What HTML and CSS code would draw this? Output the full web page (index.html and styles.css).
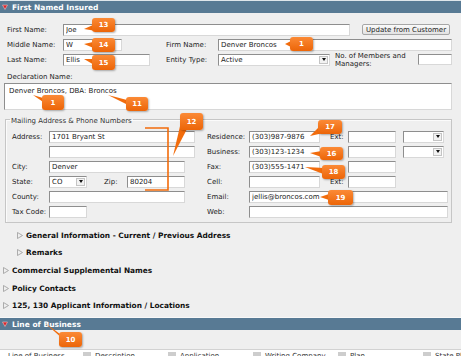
FILE: index.html
```html
<!DOCTYPE html>
<html lang="en">
<head>
    <meta charset="UTF-8">
    <meta name="viewport" content="width=device-width, initial-scale=1.0">
    <title>First Named Insured</title>
    <link rel="stylesheet" href="styles.css">
</head>
<body>
<div class="page">
    <div class="bar">
        <svg class="caret" width="6" height="6" viewBox="0 0 6 6"><polygon points="0.5,1 5.5,1 3,5.5" fill="#d8262b" stroke="#f3c2c2" stroke-width="0.6"/></svg>
        First Named Insured
    </div>

    <div class="insured">
        <div class="row">
            <label class="lbl">First Name:</label>
            <input class="w-first" type="text" value="Joe">
            <button class="btn">Update from Customer</button>
        </div>
        <div class="row">
            <label class="lbl">Middle Name:</label>
            <input class="w-middle" type="text" value="W">
            <label class="lbl lbl-mid">Firm Name:</label>
            <input class="w-firm" type="text" value="Denver Broncos">
        </div>
        <div class="row">
            <label class="lbl">Last Name:</label>
            <input class="w-last" type="text" value="Ellis">
            <label class="lbl lbl-entity">Entity Type:</label>
            <div class="select w-entity"><span class="val">Active</span><span class="arr"></span></div>
            <label class="lbl-members">No. of Members and Managers:</label>
            <input class="w-members" type="text" value="">
        </div>

        <label class="decl-label">Declaration Name:</label>
        <textarea class="decl">Denver Broncos, DBA: Broncos</textarea>

        <fieldset class="mailing">
            <legend>Mailing Address &amp; Phone Numbers</legend>
            <div class="mgrid">
                <label>Address:</label>
                <div class="cell"><input class="w-addr" type="text" value="1701 Bryant St"></div>
                <label>Residence:</label>
                <div class="cell">
                    <input class="w-phone" type="text" value="(303)987-9876">
                    <span class="ext">Ext:</span>
                    <input class="w-ext" type="text" value="">
                    <div class="select w-type"><span class="val"></span><span class="arr"></span></div>
                </div>

                <label></label>
                <div class="cell"><input class="w-addr" type="text" value=""></div>
                <label>Business:</label>
                <div class="cell">
                    <input class="w-phone" type="text" value="(303)123-1234">
                    <span class="ext"></span>
                    <input class="w-ext" type="text" value="">
                    <div class="select w-type"><span class="val"></span><span class="arr"></span></div>
                </div>

                <label>City:</label>
                <div class="cell"><input class="w-city" type="text" value="Denver"></div>
                <label>Fax:</label>
                <div class="cell">
                    <input class="w-phone" type="text" value="(303)555-1471">
                    <span class="ext"></span>
                    <input class="w-ext" type="text" value="">
                </div>

                <label>State:</label>
                <div class="cell">
                    <div class="select w-state"><span class="val">CO</span><span class="arr"></span></div>
                    <span class="zip">Zip:</span>
                    <input class="w-zip" type="text" value="80204">
                </div>
                <label>Cell:</label>
                <div class="cell">
                    <input class="w-phone" type="text" value="">
                    <span class="ext">Ext:</span>
                    <input class="w-ext" type="text" value="">
                </div>

                <label>County:</label>
                <div class="cell"><input class="w-city" type="text" value=""></div>
                <label>Email:</label>
                <div class="cell"><input class="w-email" type="text" value="jellis@broncos.com"></div>

                <label>Tax Code:</label>
                <div class="cell"><input class="w-tax" type="text" value=""></div>
                <label>Web:</label>
                <div class="cell"><input class="w-email" type="text" value=""></div>
            </div>
        </fieldset>

        <div class="section sub"><svg class="tri" width="6" height="7" viewBox="0 0 6 7"><polygon points="0.5,0.5 5.5,3.5 0.5,6.5" fill="none" stroke="#9a9a9a" stroke-width="0.8"/></svg>General Information - Current / Previous Address</div>
        <div class="section sub"><svg class="tri" width="6" height="7" viewBox="0 0 6 7"><polygon points="0.5,0.5 5.5,3.5 0.5,6.5" fill="none" stroke="#9a9a9a" stroke-width="0.8"/></svg>Remarks</div>
    </div>

    <div class="section top"><svg class="tri" width="6" height="7" viewBox="0 0 6 7"><polygon points="0.5,0.5 5.5,3.5 0.5,6.5" fill="none" stroke="#9a9a9a" stroke-width="0.8"/></svg>Commercial Supplemental Names</div>
    <div class="section top"><svg class="tri" width="6" height="7" viewBox="0 0 6 7"><polygon points="0.5,0.5 5.5,3.5 0.5,6.5" fill="none" stroke="#9a9a9a" stroke-width="0.8"/></svg>Policy Contacts</div>
    <div class="section top"><svg class="tri" width="6" height="7" viewBox="0 0 6 7"><polygon points="0.5,0.5 5.5,3.5 0.5,6.5" fill="none" stroke="#9a9a9a" stroke-width="0.8"/></svg>125, 130 Applicant Information / Locations</div>

    <div class="bar bar-lob">
        <svg class="caret" width="6" height="6" viewBox="0 0 6 6"><polygon points="0.5,1 5.5,1 3,5.5" fill="#d8262b" stroke="#f3c2c2" stroke-width="0.6"/></svg>
        Line of Business
    </div>
    <div class="lob-space"></div>
    <div class="grid-head">
        <div class="col first">Line of Business</div>
        <div class="col"><span class="sort"></span>Description</div>
        <div class="col"><span class="sort"></span>Application</div>
        <div class="col"><span class="sort"></span>Writing Company</div>
        <div class="col"><span class="sort"></span>Plan</div>
        <div class="col"><span class="sort"></span>State Plan</div>
    </div>

    <!-- callouts -->
    <svg class="tails" width="461" height="356" viewBox="0 0 461 356">
        <polyline points="145,128 168,128 168,190 145,190" fill="none" stroke="#f26c0c" stroke-width="1.6"/>
        <g fill="#f26c0c">
            <polygon points="93,25 96,31 84,29"/>
            <polygon points="93,42 96,49 84,44"/>
            <polygon points="93,59 96,66 84,59"/>
            <polygon points="291,41 293,48 285,44"/>
            <polygon points="43,98 46,104 33,95"/>
            <polygon points="127,100 130,106 108,95"/>
            <polygon points="181,122 187,129 173,156"/>
            <polygon points="319,127 323,133 310,136"/>
            <polygon points="321,151 324,158 310,153"/>
            <polygon points="323,168 326,175 305,167"/>
            <polygon points="329,194 332,201 320,197"/>
            <polygon points="60,334 64,340 45,323"/>
        </g>
    </svg>
    <div class="co co-13">13</div>
    <div class="co co-14">14</div>
    <div class="co co-15">15</div>
    <div class="co co-firm">1</div>
    <div class="co co-decl">1</div>
    <div class="co co-11">11</div>
    <div class="co co-12">12</div>
    <div class="co co-17">17</div>
    <div class="co co-16">16</div>
    <div class="co co-18">18</div>
    <div class="co co-19">19</div>
    <div class="co co-10">10</div>
</div>
</body>
</html>
```

FILE: styles.css
```css
* {
    margin: 0;
    padding: 0;
    box-sizing: border-box;
}

body {
    font-family: 'DejaVu Sans', Verdana, sans-serif;
    font-size: 7px;
    color: #222;
    background: #efefef;
    width: 461px;
    height: 356px;
    overflow: hidden;
}

.page {
    position: relative;
    height: 356px;
}

.bar {
    height: 13px;
    border-top: 1px solid #dfe6eb;
    background: #587a94;
    color: #fff;
    font-weight: bold;
    font-size: 7.5px;
    display: flex;
    align-items: center;
    padding-left: 2px;
}

.caret {
    margin-right: 4px;
}

.insured {
    padding: 9px 9px 0 7px;
}

.row {
    display: flex;
    align-items: center;
    height: 15px;
}

.lbl {
    width: 56px;
    flex-shrink: 0;
}

input, textarea {
    font: inherit;
    color: #222;
    background: #fff;
    border: 1px solid;
    border-color: #8e8e8e #d8d8d8 #d8d8d8 #8e8e8e;
    outline: none;
}

input {
    height: 12px;
    padding: 0 2px;
    flex-shrink: 0;
}

.w-first { width: 287px; }
.w-middle { width: 59px; }
.w-last { width: 87px; }
.w-firm { width: 234px; }
.w-members { width: 34px; height: 11px; }

.lbl-mid,
.lbl-entity {
    width: 52px;
}
.lbl-mid { margin-left: 44px; }
.lbl-entity { margin-left: 16px; }

.lbl-members {
    width: 83px;
    margin-left: 5px;
    line-height: 8px;
}

.btn {
    margin-left: 12px;
    width: 88px;
    height: 11px;
    font: inherit;
    color: #222;
    border: 1px solid #a6a6a6;
    border-radius: 2px;
    background: linear-gradient(#fafafa, #e2e2e2);
}

.select {
    display: flex;
    height: 12px;
    background: #fff;
    border: 1px solid;
    border-color: #8e8e8e #d8d8d8 #d8d8d8 #8e8e8e;
    flex-shrink: 0;
}

.select .val {
    flex: 1;
    padding-left: 2px;
    line-height: 10px;
}

.select .arr {
    width: 9px;
    margin: 1px;
    background: #f2f2f2;
    border: 1px solid #c4c4c4;
    display: flex;
    align-items: center;
    justify-content: center;
}

.select .arr::after {
    content: "";
    border-left: 2.5px solid transparent;
    border-right: 2.5px solid transparent;
    border-top: 3px solid #111;
}

.w-entity { width: 112px; }

.decl-label {
    display: block;
    margin-top: 6px;
    line-height: 8px;
}

.decl {
    display: block;
    margin: 2px 0 0 -3px;
    width: 448px;
    height: 27px;
    padding: 3px 4px;
    resize: none;
    line-height: 8px;
}

.mailing {
    margin: 4px 0 0 -2px;
    width: 447px;
    border: 1px solid #c6c6c6;
    box-shadow: inset 1px 1px 0 #fbfbfb;
    padding: 4px 3px 3px 6px;
}

.mailing legend {
    margin-left: -2px;
    padding: 3px 1px 0;
    line-height: 8px;
    color: #333;
}

.mgrid {
    display: grid;
    grid-template-columns: 37px 158px 42px 1fr;
    grid-auto-rows: 15px;
    align-items: center;
}

.cell {
    display: flex;
    align-items: center;
}

.w-addr { width: 146px; }
.w-city { width: 136px; }
.w-state { width: 38px; }
.w-zip { width: 58px; }
.w-tax { width: 38px; }
.w-phone { width: 71px; }
.w-ext { width: 48px; }
.w-type { width: 41px; margin-left: 7px; }
.w-email { width: 199px; }

.ext {
    width: 18px;
    margin-left: 10px;
}

.zip {
    width: 23px;
    margin-left: 17px;
}

.section {
    display: flex;
    align-items: center;
    height: 17.6px;
    font-weight: bold;
    font-size: 7.4px;
    color: #111;
}

.section .tri {
    margin-right: 3px;
}

.section.sub {
    margin-left: 10px;
}

.mailing + .section {
    margin-top: 3.5px;
}

.section.top {
    padding-left: 3px;
}

.bar-lob {
    margin-top: 3px;
    border-top: 1px solid #f8f8f8;
}

.lob-space {
    height: 19px;
}

.grid-head {
    display: grid;
    grid-template-columns: 83px repeat(5, 85px);
    height: 10px;
    background: #fff;
    border-top: 1px solid #d2d2d2;
    color: #333;
    white-space: nowrap;
    overflow: hidden;
}

.grid-head .col {
    display: flex;
    align-items: flex-start;
    padding-top: 2px;
}

.grid-head .first {
    padding-left: 8px;
}

.sort {
    width: 8px;
    height: 8px;
    background: #cdcdcd;
    margin-right: 4px;
}

/* callouts */
.tails {
    position: absolute;
    left: 0;
    top: 0;
    pointer-events: none;
}

.co {
    position: absolute;
    background: linear-gradient(#fb8a36, #ec6508);
    color: #fff;
    font-weight: bold;
    font-size: 7px;
    border-radius: 3px;
    display: flex;
    align-items: center;
    justify-content: center;
    box-shadow: 1px 1px 2px rgba(0, 0, 0, 0.3);
}

.co-13 { left: 92px; top: 18px; width: 23px; height: 14px; }
.co-14 { left: 92px; top: 38px; width: 23px; height: 14px; }
.co-15 { left: 92px; top: 55px; width: 23px; height: 15px; }
.co-firm { left: 290px; top: 37px; width: 23px; height: 14px; }
.co-decl { left: 42px; top: 95px; width: 22px; height: 15px; }
.co-11 { left: 126px; top: 97px; width: 22px; height: 14px; }
.co-12 { left: 180px; top: 113px; width: 23px; height: 17px; }
.co-17 { left: 318px; top: 120px; width: 24px; height: 14px; }
.co-16 { left: 320px; top: 147px; width: 23px; height: 13px; }
.co-18 { left: 322px; top: 165px; width: 23px; height: 14px; }
.co-19 { left: 328px; top: 190px; width: 25px; height: 15px; }
.co-10 { left: 59px; top: 332px; width: 23px; height: 15px; }
```
